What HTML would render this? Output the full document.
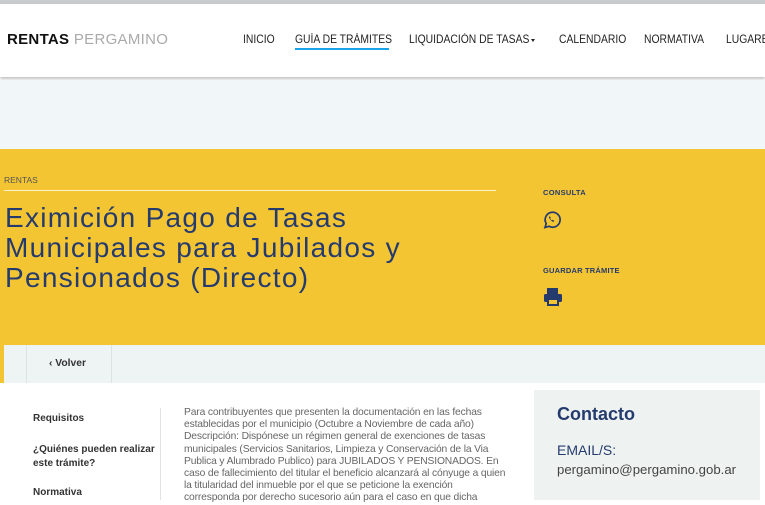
<!DOCTYPE html>
<html><head><meta charset="utf-8"><style>
*{margin:0;padding:0;box-sizing:border-box}
body{width:765px;height:500px;overflow:hidden;background:#fff;font-family:"Liberation Sans",sans-serif;position:relative}
.top{position:absolute;left:0;top:0;width:765px;height:4px;background:#c9cbcd}
.hdr{position:absolute;left:0;top:4px;width:765px;height:73px;background:#fff;box-shadow:0 2px 3px rgba(0,0,0,.25)}
.logo{position:absolute;left:7px;top:31px;font-size:15px;font-weight:bold;color:#111;letter-spacing:.3px}
.logo span{font-weight:normal;color:#aaa}
.nav{position:absolute;top:34px;font-size:11.5px;line-height:13px;color:#222;white-space:nowrap;transform:scaleX(.9);transform-origin:left}
.band{position:absolute;left:0;top:80px;width:765px;height:69px;background:#f1f6f9}
.yel{position:absolute;left:0;top:149px;width:765px;height:196px;background:#f4c533}
.blue{color:#253b6e}
.vb{position:absolute;left:4px;top:345px;width:761px;height:38px;background:#eef3f3}
.ys{position:absolute;left:0;top:345px;width:4px;height:38px;background:#f4c533}
.side{position:absolute;left:33px;font-size:10px;color:#333;line-height:14px;font-weight:600}
.p{position:absolute;left:184px;top:407px;width:322px;font-size:10.3px;line-height:12.2px;color:#666;letter-spacing:-.15px}
.c{position:absolute;left:534px;top:390px;width:226px;height:110px;background:#eef3f2}
</style></head><body>
<div class="top"></div>
<div class="hdr"></div>
<div class="logo">RENTAS <span>PERGAMINO</span></div>
<div class="nav" style="left:243px">INICIO</div>
<div class="nav" style="left:295px">GUÍA DE TRÁMITES</div>
<div style="position:absolute;left:295px;top:48px;width:94px;height:2px;background:#1aa3e8"></div>
<div class="nav" style="left:409px">LIQUIDACIÓN DE TASAS</div>
<div style="position:absolute;left:531px;top:39px;border-left:2.5px solid transparent;border-right:2.5px solid transparent;border-top:3px solid #222"></div>
<div class="nav" style="left:559px">CALENDARIO</div>
<div class="nav" style="left:644px">NORMATIVA</div>
<div class="nav" style="left:726px">LUGARES</div>
<div class="band"></div>
<div class="yel"></div>
<div style="position:absolute;left:4px;top:175px;font-size:8.5px;color:#555">RENTAS</div>
<div style="position:absolute;left:4px;top:190px;width:492px;height:1px;background:#fff3cf"></div>
<div class="blue" style="position:absolute;left:5px;top:203px;width:450px;font-size:28px;line-height:30px;letter-spacing:1.3px">Eximición Pago de Tasas Municipales para Jubilados y Pensionados (Directo)</div>
<div class="blue" style="position:absolute;left:543px;top:188px;font-size:7.5px;font-weight:bold;letter-spacing:.3px">CONSULTA</div>
<svg style="position:absolute;left:542px;top:210px" width="20" height="20" viewBox="0 0 20 20"><path d="M3 17.5 L4.2 13.6 A7.5 7.5 0 1 1 7 16.3 Z" fill="none" stroke="#253b6e" stroke-width="1.7"/><path d="M7.3 6.5 q-.6 1.2 .6 2.8 q1.6 2.2 3.3 2.7 l1.1-1.1 l-1.6-1.1 l-.8.6 q-1.1-.6-1.7-1.7 l.6-.7 l-.9-1.7z" fill="#253b6e"/></svg>
<div class="blue" style="position:absolute;left:543px;top:266px;font-size:7.5px;font-weight:bold;letter-spacing:.2px">GUARDAR TRÁMITE</div>
<svg style="position:absolute;left:543px;top:287px" width="20" height="20" viewBox="0 0 20 20"><rect x="4" y="1" width="11" height="6" fill="#253b6e"/><rect x="1" y="7" width="18" height="8" rx="1.5" fill="#253b6e"/><rect x="5" y="12" width="10" height="6" fill="#f4c533" stroke="#253b6e" stroke-width="2"/></svg>
<div class="ys"></div>
<div class="vb"></div>
<div style="position:absolute;left:111px;top:345px;width:1px;height:38px;background:#dde3e3"></div>
<div style="position:absolute;left:26px;top:345px;width:1px;height:38px;background:#dde3e3"></div>
<div style="position:absolute;left:49px;top:358px;font-size:10.3px;color:#333;font-weight:600">‹ Volver</div>
<div class="side" style="top:412px">Requisitos</div>
<div class="side" style="top:443px">¿Quiénes pueden realizar<br>este trámite?</div>
<div class="side" style="top:486px">Normativa</div>
<div style="position:absolute;left:160px;top:408px;width:1px;height:92px;background:#e3e3e3"></div>
<div class="p">Para contribuyentes que presenten la documentación en las fechas establecidas por el municipio (Octubre a Noviembre de cada año) Descripción: Dispónese un régimen general de exenciones de tasas municipales (Servicios Sanitarios, Limpieza y Conservación de la Via Publica y Alumbrado Publico) para JUBILADOS Y PENSIONADOS. En caso de fallecimiento del titular el beneficio alcanzará al cónyuge a quien la titularidad del inmueble por el que se peticione la exención corresponda por derecho sucesorio aún para el caso en que dicha</div>
<div class="c"></div>
<div class="blue" style="position:absolute;left:557px;top:404px;font-size:18px;font-weight:bold">Contacto</div>
<div class="blue" style="position:absolute;left:557px;top:442px;font-size:14px">EMAIL/S:</div>
<div style="position:absolute;left:557px;top:462px;font-size:13.2px;color:#444">pergamino@pergamino.gob.ar</div>
</body></html>
